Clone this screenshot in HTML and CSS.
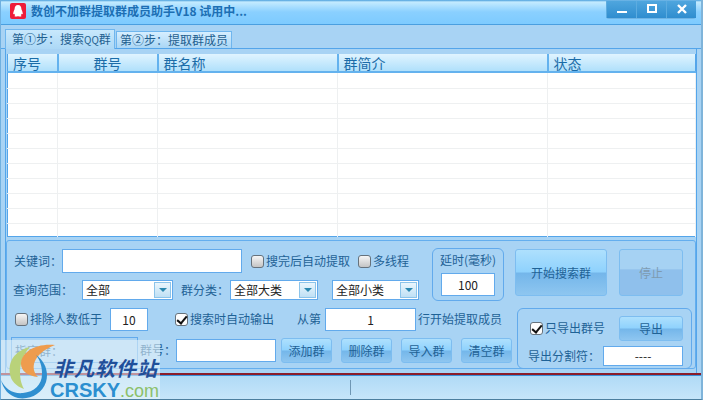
FILE: index.html
```html
<!DOCTYPE html>
<html lang="zh-CN">
<head>
    <meta charset="UTF-8">
    <title>数创不加群提取群成员助手</title>
    <link rel="stylesheet" href="styles.css">
</head>
<body>

    <div class="window">
        <div class="titlebar">
            <svg class="app-icon" width="16" height="16" viewBox="0 0 16 16">
                <rect width="16" height="16" rx="2" fill="#ee1c3a"/>
                <path d="M8 2C5.6 2 4.6 3.8 4.6 6C4.6 6.8 3.2 8.6 3.2 10.6C3.2 11.4 3.8 11.4 4.4 10.8C4.6 11.6 4.9 12 5.2 12.3C4.4 12.6 4.2 13.6 5.6 13.6C6.8 13.6 7.4 13.2 8 13.2C8.6 13.2 9.2 13.6 10.4 13.6C11.8 13.6 11.6 12.6 10.8 12.3C11.1 12 11.4 11.6 11.6 10.8C12.2 11.4 12.8 11.4 12.8 10.6C12.8 8.6 11.4 6.8 11.4 6C11.4 3.8 10.4 2 8 2Z" fill="#fff"/>
            </svg>
            <span class="title-text">数创不加群提取群成员助手V18 试用中...</span>
            <div class="win-buttons">
                <div class="win-btn">
                    <svg width="12" height="12" viewBox="0 0 12 12"><rect x="1" y="8" width="10" height="2" fill="#fff"/></svg>
                </div>
                <div class="win-btn">
                    <svg width="12" height="12" viewBox="0 0 12 12"><rect x="2" y="2" width="8" height="7" fill="none" stroke="#fff" stroke-width="2"/></svg>
                </div>
                <div class="win-btn">
                    <svg width="12" height="12" viewBox="0 0 12 12"><path d="M2 2L10 10M10 2L2 10" stroke="#fff" stroke-width="2.4"/></svg>
                </div>
            </div>
        </div>

        <div class="tabs">
            <div class="tab active">第①步：搜索<span class="qq">QQ</span>群</div>
            <div class="tab">第②步：提取群成员</div>
        </div>

        <div class="tab-body">
            <table class="grid">
                <colgroup>
                    <col class="col-no"><col class="col-id"><col class="col-name"><col class="col-intro"><col>
                </colgroup>
                <thead>
                    <tr><th>序号</th><th class="center">群号</th><th>群名称</th><th>群简介</th><th>状态</th></tr>
                </thead>
                <tbody>
                    <tr><td></td><td></td><td></td><td></td><td></td></tr>
                    <tr><td></td><td></td><td></td><td></td><td></td></tr>
                    <tr><td></td><td></td><td></td><td></td><td></td></tr>
                    <tr><td></td><td></td><td></td><td></td><td></td></tr>
                    <tr><td></td><td></td><td></td><td></td><td></td></tr>
                    <tr><td></td><td></td><td></td><td></td><td></td></tr>
                    <tr><td></td><td></td><td></td><td></td><td></td></tr>
                    <tr><td></td><td></td><td></td><td></td><td></td></tr>
                    <tr><td></td><td></td><td></td><td></td><td></td></tr>
                    <tr><td></td><td></td><td></td><td></td><td></td></tr>
                    <tr><td></td><td></td><td></td><td></td><td></td></tr>
                </tbody>
            </table>

            <div class="search-panel">
                <div class="panel-top">
                    <div class="query">
                        <div class="row row-keyword">
                            <span class="lbl lbl-keyword">关键词：</span>
                            <div class="input input-keyword"></div>
                            <span class="check check-auto"></span>
                            <span class="lbl">搜完后自动提取</span>
                            <span class="check check-thread"></span>
                            <span class="lbl">多线程</span>
                        </div>
                        <div class="row row-select">
                            <span class="lbl lbl-range">查询范围：</span>
                            <div class="select select-range">全部<span class="arrow"></span></div>
                            <span class="lbl lbl-cat">群分类：</span>
                            <div class="select select-cat">全部大类<span class="arrow"></span></div>
                            <div class="select select-sub">全部小类<span class="arrow"></span></div>
                        </div>
                    </div>
                    <div class="delay-box">
                        <span class="lbl">延时(毫秒)</span>
                        <div class="input input-delay">100</div>
                    </div>
                    <div class="btn btn-start">开始搜索群</div>
                    <div class="btn btn-stop">停止</div>
                </div>

                <div class="panel-bottom">
                    <div class="extract">
                        <div class="row row-filter">
                            <span class="check check-min"></span>
                            <span class="lbl">排除人数低于</span>
                            <div class="input input-min">10</div>
                            <span class="check checked check-output"></span>
                            <span class="lbl">搜索时自动输出</span>
                            <span class="lbl lbl-from">从第</span>
                            <div class="input input-from">1</div>
                            <span class="lbl lbl-to">行开始提取成员</span>
                        </div>
                        <div class="row row-group">
                            <div class="group-box"><span class="lbl">指定群：</span></div>
                            <span class="lbl lbl-group">群号：</span>
                            <div class="input input-group"></div>
                            <div class="btn btn-small">添加群</div>
                            <div class="btn btn-small">删除群</div>
                            <div class="btn btn-small">导入群</div>
                            <div class="btn btn-small">清空群</div>
                        </div>
                    </div>
                    <div class="export-box">
                        <div class="row export-top">
                            <span class="check checked check-export"></span>
                            <span class="lbl">只导出群号</span>
                            <div class="btn btn-export">导出</div>
                        </div>
                        <div class="row export-sep">
                            <span class="lbl">导出分割符：</span>
                            <div class="input input-sep">----</div>
                        </div>
                    </div>
                </div>
            </div>
        </div>

        <div class="red-line"></div>
        <div class="statusbar">
            <div class="status-cell"></div>
            <div class="status-cell"></div>
        </div>

        <div class="watermark">
            <svg class="wm-logo" width="56" height="60" viewBox="0 0 56 60">
                <path d="M30 7C14 11 8 22 10 34C11 41 16 46 24 49C18 38 18 20 30 7Z" fill="#b9d27a"/>
                <path d="M55 5C36 3 21 12 21 24C21 31 28 36 38 37C30 29 32 14 55 5Z" fill="#ee9c4e"/>
                <path d="M36 15C45 21 49 32 46 42C42 54 30 60 18 58C9 56 3 49 1 40C5 49 13 54 23 53C34 52 42 45 42 34C42 26 40 20 36 15Z" fill="#2f8fd0"/>
            </svg>
            <div class="wm-name">非凡软件站</div>
            <div class="wm-site"><span class="wm-crsky">CRSKY</span><span class="wm-com">.com</span></div>
        </div>
    </div>

</body>
</html>
```

FILE: styles.css
```css
* {
    box-sizing: border-box;
}

body {
    margin: 0;
    font-family: "Noto Sans CJK SC", "Liberation Sans", sans-serif;
    font-size: 12px;
    color: #1f5f8f;
}

.window {
    position: relative;
    width: 703px;
    height: 400px;
    overflow: hidden;
    display: flex;
    flex-direction: column;
    background-color: #a8d3f4;
    border-left: 1px solid #6fb0e0;
    border-right: 2px solid #7fb4da;
    border-bottom: 1px solid #4c7f9f;
}

.titlebar {
    height: 25px;
    flex: none;
    display: flex;
    align-items: center;
    padding: 0 5px 2px 9px;
    background: linear-gradient(#4a9fdc 0, #c4ebff 2px, #8ad0ff 12px, #7ecbff 23px);
    border-bottom: 1px solid #4a9fe0;
}

.title-text {
    margin-left: 5px;
    font-weight: bold;
    color: #1c6fb4;
    line-height: 16px;
}

.win-buttons {
    margin-left: auto;
    display: flex;
    height: 18px;
    margin-top: -3px;
    border-bottom: 1px solid #6fb4e4;
    border-radius: 0 0 3px 3px;
}

.win-btn {
    width: 30px;
    display: flex;
    align-items: center;
    justify-content: center;
    background: linear-gradient(#4fa6de, #2f8dcf);
    border-left: 1px solid #5cace0;
}

.tabs {
    height: 24px;
    flex: none;
    display: flex;
    align-items: flex-end;
    padding-left: 4px;
    gap: 1px;
    background-color: #a8d3f4;
    border-bottom: 1px solid #54a5ea;
}

.tab {
    height: 17px;
    width: 116px;
    line-height: 15px;
    padding-left: 3px;
    color: #1f5f8f;
    background: linear-gradient(#d6eeff, #aad6f5);
    border: 1px solid #6fb6ee;
    border-bottom: none;
}

.tab.active {
    height: 20px;
    width: 110px;
    line-height: 18px;
    padding-left: 6px;
    margin-bottom: -1px;
    background: linear-gradient(#c8e8fc, #acd8f6);
}

.qq {
    font-size: 10px;
}

.tab-body {
    height: 324px;
    flex: none;
    margin: 0 4px;
    padding-top: 5px;
    border-left: 1px solid #54a5ea;
    border-right: 1px solid #54a5ea;
}

.grid {
    width: 689px;
    height: 183px;
    margin-left: 1px;
    border-collapse: collapse;
    table-layout: fixed;
    background-color: #fff;
    border-left: 1px solid #54a5ea;
    border-right: 1px solid #54a5ea;
    border-bottom: 1px solid #54a5ea;
}

.col-no {
    width: 50px;
}

.col-id {
    width: 100px;
}

.col-name {
    width: 180px;
}

.col-intro {
    width: 210px;
}

.grid th {
    height: 18px;
    padding: 0 0 0 5px;
    font-size: 14px;
    font-weight: normal;
    line-height: 16px;
    text-align: left;
    color: #1a6ca8;
    background: linear-gradient(#e0f4ff, #b0e0fb);
    border-right: 2px solid #64b2ee;
    border-bottom: 2px solid #64b2ee;
}

.grid th:last-child {
    border-right: none;
}

.grid th.center {
    text-align: center;
    padding: 0;
}

.grid td {
    height: 15px;
    padding: 0;
    border-right: 1px solid #eef0f1;
    border-bottom: 1px solid #eef0f1;
}

.grid tr:first-child td {
    height: 16px;
}

.grid tr:last-child td {
    height: 13px;
    border-bottom: none;
}

.search-panel {
    margin-top: 3px;
    height: 129px;
    padding-top: 8px;
    background-color: #a8d3f4;
    border: 1px solid #64aeee;
    border-radius: 3px;
}

.panel-top {
    display: flex;
    height: 58px;
    align-items: flex-start;
}

.panel-bottom {
    display: flex;
    align-items: flex-start;
}

.row {
    display: flex;
    align-items: center;
}

.lbl {
    white-space: nowrap;
    line-height: 16px;
    color: #1f6296;
}

.query {
    width: 425px;
}

.row-keyword {
    height: 24px;
    padding-left: 7px;
}

.row-select {
    height: 20px;
    margin-top: 7px;
    padding-left: 6px;
}

.input {
    background-color: #fff;
    border: 1px solid #62aaec;
    text-align: center;
    color: #222;
    display: flex;
    align-items: center;
    justify-content: center;
}

.input-keyword {
    width: 180px;
    height: 24px;
}

.check {
    flex: none;
    width: 13px;
    height: 13px;
    margin-right: 2px;
    background: linear-gradient(#f6f6f6, #c4c4c4);
    border: 1px solid #66727c;
    border-radius: 3px;
}

.check.checked {
    position: relative;
    background: #fdfdfd;
}

.check.checked::after {
    content: "";
    position: absolute;
    left: 3px;
    top: 0;
    width: 4px;
    height: 8px;
    border-right: 2px solid #111;
    border-bottom: 2px solid #111;
    transform: rotate(40deg);
}

.check-auto {
    margin-left: 9px;
}

.check-thread {
    margin-left: 8px;
}

.select {
    position: relative;
    height: 20px;
    padding-left: 3px;
    line-height: 18px;
    color: #222;
    background-color: #fff;
    border: 1px solid #62aaec;
}

.arrow {
    position: absolute;
    right: 1px;
    top: 1px;
    width: 17px;
    height: 16px;
    background: linear-gradient(#eaf6fd, #bfe0f5);
    border: 1px solid #8cc4ea;
}

.arrow::after {
    content: "";
    position: absolute;
    left: 4px;
    top: 5px;
    border-left: 4px solid transparent;
    border-right: 4px solid transparent;
    border-top: 4px solid #2a88b0;
}

.select-range {
    width: 91px;
    margin-left: 9px;
}

.lbl-cat {
    margin-left: 8px;
}

.select-cat {
    width: 88px;
    margin-left: 1px;
}

.select-sub {
    width: 87px;
    margin-left: 14px;
}

.delay-box {
    width: 72px;
    height: 53px;
    margin-top: -1px;
    display: flex;
    flex-direction: column;
    align-items: center;
    padding-top: 3px;
    gap: 5px;
    border: 1px solid #62aaec;
    border-radius: 6px;
}

.input-delay {
    width: 54px;
    height: 23px;
}

.btn {
    display: flex;
    align-items: center;
    justify-content: center;
    color: #1f6296;
    border: 1px solid #7dbdf0;
    border-radius: 3px;
    background: linear-gradient(#aee0fd 0, #8fd2fd 48%, #74b6ea 52%, #8ec6f0 100%);
}

.btn-start {
    width: 92px;
    height: 47px;
    margin-left: 11px;
}

.btn-stop {
    width: 64px;
    height: 47px;
    margin-left: 12px;
    color: #7e9bb0;
    background: linear-gradient(#a6d2f3 0, #a6d2f3 42%, #8fc0ec 44%, #8fc0ec 100%);
}

.extract {
    width: 510px;
}

.row-filter {
    height: 24px;
    padding-left: 8px;
}

.input-min {
    width: 38px;
    height: 23px;
    margin-left: 8px;
}

.check-output {
    margin-left: 27px;
}

.lbl-from {
    margin-left: 23px;
}

.input-from {
    width: 91px;
    height: 23px;
    margin-left: 4px;
}

.lbl-to {
    margin-left: 2px;
}

.row-group {
    height: 26px;
    margin-top: 6px;
    padding-left: 4px;
}

.group-box {
    width: 127px;
    height: 26px;
    padding: 4px 0 0 3px;
    border: 1px solid #62aaec;
}

.lbl-group {
    margin-left: 2px;
}

.input-group {
    width: 100px;
    height: 23px;
}

.btn-small {
    width: 51px;
    height: 25px;
    margin-left: 9px;
}

.input-group + .btn-small {
    margin-left: 5px;
}

.export-box {
    width: 175px;
    height: 61px;
    margin-top: 1px;
    padding: 6px 0 0 10px;
    border: 1px solid #62aaec;
    border-radius: 6px;
}

.check-export {
    margin-left: 2px;
}

.export-top {
    height: 26px;
}

.btn-export {
    width: 64px;
    height: 25px;
    margin-left: 14px;
}

.export-sep {
    height: 21px;
    margin-top: 4px;
}

.input-sep {
    width: 80px;
    height: 20px;
    margin-left: 3px;
}

.red-line {
    height: 3px;
    flex: none;
    background: linear-gradient(#8a1c2a 0, #8a1c2a 2px, #3a8fd8 2px);
}

.statusbar {
    flex: 1;
    display: flex;
    background: linear-gradient(#b0daf6, #c6e6fa);
}

.status-cell {
    width: 350px;
    border-right: 1px solid #6f97b4;
    margin: 4px 0;
}

.status-cell:last-child {
    border-right: none;
}

.watermark {
    position: absolute;
    left: -1px;
    top: 340px;
    width: 160px;
    height: 60px;
    background-color: rgba(235, 245, 250, 0.55);
}

.wm-logo {
    position: absolute;
    left: 0;
    top: 0;
}

.wm-name {
    position: absolute;
    left: 53px;
    top: 18px;
    font-weight: bold;
    font-style: italic;
    font-size: 20px;
    line-height: 20px;
    letter-spacing: 1px;
    white-space: nowrap;
    color: #1f4f9a;
}

.wm-site {
    position: absolute;
    left: 50px;
    top: 40px;
    font-family: "Liberation Sans", sans-serif;
    font-size: 20px;
    font-weight: bold;
    line-height: 20px;
    white-space: nowrap;
}

.wm-crsky {
    color: #2b8fd0;
}

.wm-com {
    font-weight: normal;
    font-size: 18px;
    color: #8cc06a;
}
```
